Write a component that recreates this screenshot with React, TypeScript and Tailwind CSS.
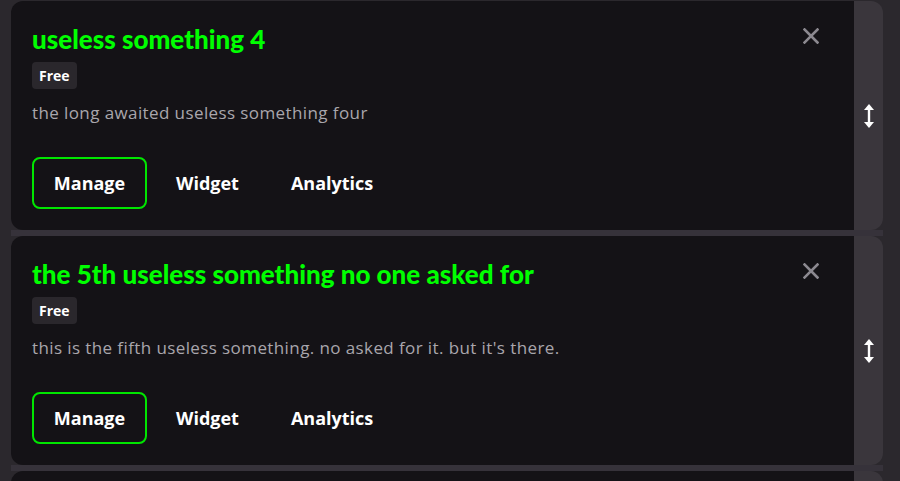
import React from 'react';

type Item = {
  id: number;
  title: string;
  plan: string;
  description: string;
};

const items: Array<Item> = [
  {
    id: 4,
    title: 'useless something 4',
    plan: 'Free',
    description: 'the long awaited useless something four',
  },
  {
    id: 5,
    title: 'the 5th useless something no one asked for',
    plan: 'Free',
    description:
      "this is the fifth useless something. no asked for it. but it's there.",
  },
];

function CloseIcon() {
  return (
    <svg width="16" height="16" viewBox="0 0 16 16" fill="none">
      <path
        d="M1.5 1.5L14.5 14.5M14.5 1.5L1.5 14.5"
        stroke="#8b888f"
        strokeWidth="2.6"
        strokeLinecap="square"
      />
    </svg>
  );
}

function DragIcon() {
  return (
    <svg width="10" height="24" viewBox="0 0 10 24" fill="none">
      <path d="M5 0L10 6H0Z" fill="#ffffff" />
      <path d="M5 24L10 18H0Z" fill="#ffffff" />
      <rect x="3.8" y="5" width="2.4" height="14" fill="#ffffff" />
    </svg>
  );
}

function ItemCard({ item }: { item: Item }) {
  return (
    <div className="flex h-[229px] overflow-hidden rounded-xl">
      <div className="flex flex-1 flex-col bg-[#141216] pt-[22px] pb-[21px] pl-[21px] pr-[35px]">
        <div className="flex items-start justify-between">
          <h2 className="font-['Lato',sans-serif] text-[26px] font-black leading-[33px] text-[#00ff00]">
            {item.title}
          </h2>
          <button className="mt-[5px]">
            <CloseIcon />
          </button>
        </div>
        <div className="mt-[6px] flex">
          <span className="rounded-[4px] bg-[#2a272c] px-[7px] py-[4px] font-['Open_Sans',sans-serif] text-[14px] font-bold leading-[19px] text-white">
            {item.plan}
          </span>
        </div>
        <p className="mt-[12px] font-['Open_Sans',sans-serif] text-[17px] leading-[24px] tracking-[0.4px] text-[#a9a6ac]">
          {item.description}
        </p>
        <div className="mt-auto flex gap-[6px]">
          <button className="h-[52px] w-[115px] rounded-[8px] border-2 border-[#00e600] font-['Open_Sans',sans-serif] text-[18px] font-bold text-white">
            Manage
          </button>
          <button className="h-[52px] px-[23px] font-['Open_Sans',sans-serif] text-[18px] font-bold text-white">
            Widget
          </button>
          <button className="h-[52px] px-[23px] font-['Open_Sans',sans-serif] text-[18px] font-bold text-white">
            Analytics
          </button>
        </div>
      </div>
      <div className="flex w-[29px] items-center justify-center bg-[#3a363c]">
        <DragIcon />
      </div>
    </div>
  );
}

export default function App() {
  return (
    <div className="h-[481px] overflow-hidden bg-[#2b282d] pl-[11px] pr-[17px] pt-[1px]">
      {items.map((item) => (
        <div key={item.id}>
          <ItemCard item={item} />
          <div className="h-[6px] bg-[#36323a]" />
        </div>
      ))}
      {/* next card, scrolled below the fold */}
      <div className="flex h-[20px] overflow-hidden rounded-t-xl">
        <div className="flex-1 bg-[#141216]" />
        <div className="w-[29px] bg-[#3a363c]" />
      </div>
    </div>
  );
}
